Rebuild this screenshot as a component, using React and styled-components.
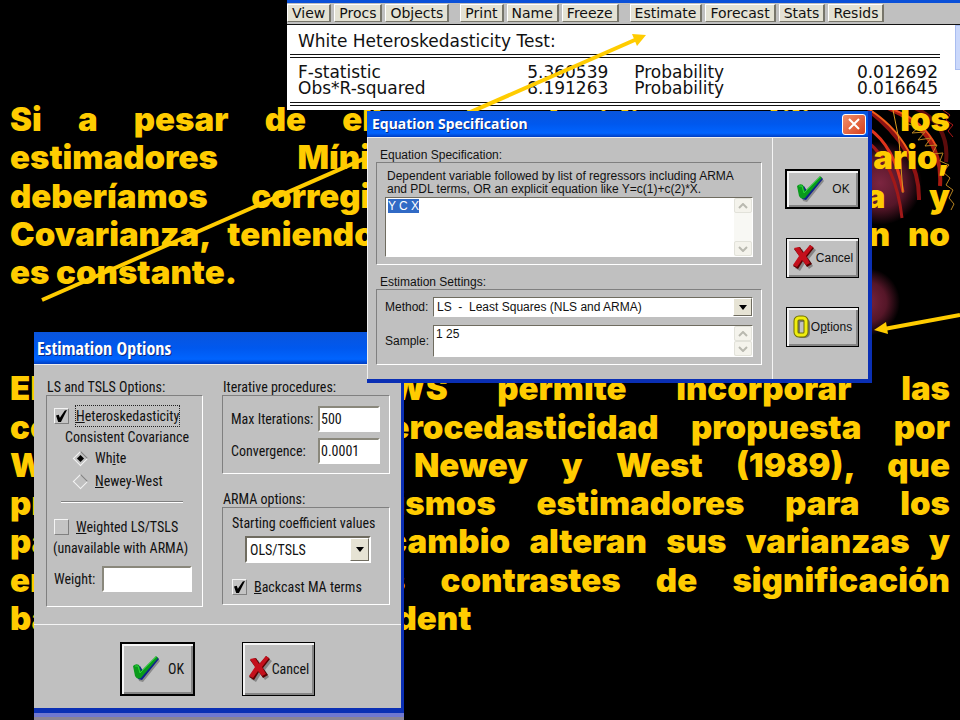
import React, { useEffect, useRef } from 'react';
import styled, { createGlobalStyle } from 'styled-components';

const GlobalStyle = createGlobalStyle`
  * {
    box-sizing: border-box;
  }

  body {
    margin: 0;
    background: #000;
  }
`;

const firstParagraph = [
  'Si a pesar de ello aún decidimos utilizar los',
  'estimadores Mínimos Cuadrados Ordinario,',
  'deberíamos corregir la matriz de Varianza y',
  'Covarianza, teniendo en cuenta que la dispersión no',
  'es constante.',
];

const secondParagraph = [
  'El programa E-VIEWS permite incorporar las',
  'correcciones de heterocedasticidad propuesta por',
  'White (1980) o de Newey y West (1989), que',
  'proporcionan los mismos estimadores para los',
  'parámetros, pero en cambio alteran sus varianzas y',
  'en consecuencia los contrastes de significación',
  'basados en las T de Student',
];

const toolGroups = [
  ['View', 'Procs', 'Objects'],
  ['Print', 'Name', 'Freeze'],
  ['Estimate', 'Forecast', 'Stats', 'Resids'],
];

const CheckIcon = () => (
  <svg width="30" height="30" viewBox="0 0 30 30" aria-hidden="true">
    <path d="M5 15 L10 14 L12 19 L27 4 L29 7 L12 28 L8 27 Z" fill="#8a8a8a" />
    <path d="M4 14 L9 12 L12 17 L26 3 L28 5 L11 26 L7 25 Z" fill="#10208c" />
    <path d="M2 12 Q5 9 8 11 L10 17 L25 2 L27 4 L10 24 Q6 26 4 22 Z" fill="#0a9a1c" />
    <path d="M4 12 L7 12 L9 19 L25 3" fill="none" stroke="#2ed43c" strokeWidth="1" />
  </svg>
);

const CrossIcon = () => (
  <svg width="24" height="28" viewBox="0 0 24 28" aria-hidden="true">
    <path d="M5 7 L10 5 L14 11 L20 3 L24 6 L17 15 L21 22 L17 25 L13 19 L8 27 L3 24 L10 15 Z" fill="#858585" />
    <path d="M2 5 L8 3 L12 9 L18 1 L22 4 L15 13 L20 20 L15 23 L11 17 L6 25 L1 22 L8 13 Z" fill="#5a0000" />
    <path d="M2 4 L7 3 L11 9 L18 1 L21 3 L14 12 L18 19 L14 21 L10 16 L5 23 L1 21 L7 12 Z" fill="#c4101c" />
  </svg>
);

const OptionsIcon = () => (
  <svg width="18" height="24" viewBox="0 0 18 24" aria-hidden="true">
    <rect x="5" y="5" width="10" height="16" rx="3" fill="none" stroke="#777" strokeWidth="4" />
    <rect x="3" y="3" width="10" height="17" rx="3" fill="none" stroke="#6f6f00" strokeWidth="5" />
    <rect x="3" y="3" width="10" height="17" rx="3" fill="none" stroke="#f0ee10" strokeWidth="3" />
  </svg>
);

const Chevron = ({ up }) => (
  <svg width="10" height="6" viewBox="0 0 10 6" aria-hidden="true">
    <path d={up ? 'M1 5 L5 1 L9 5' : 'M1 1 L5 5 L9 1'} fill="none" stroke="#b9b9b0" strokeWidth="2" />
  </svg>
);

const Fireworks = () => (
  <Backdrop viewBox="840 110 120 240" aria-hidden="true">
    <defs>
      <radialGradient id="ball">
        <stop offset="0" stopColor="#7c2540" />
        <stop offset="0.6" stopColor="#551628" />
        <stop offset="1" stopColor="#000" />
      </radialGradient>
    </defs>
    <circle cx="880" cy="183" r="42" fill="url(#ball)" />
    <circle cx="866" cy="302" r="34" fill="url(#ball)" />
    <g fill="none">
      <path d="M868 142 Q896 165 902 218" stroke="#a01818" strokeWidth="3" />
      <path d="M868 110 Q920 150 919 200" stroke="#8e1212" strokeWidth="4" />
      <path d="M868 128 Q895 146 903 192" stroke="#e0341c" strokeWidth="3" />
      <path d="M870 110 Q898 128 912 158" stroke="#f2601c" strokeWidth="2" />
      <path d="M888 108 Q944 132 940 186" stroke="#a81a10" strokeWidth="4" />
      <path d="M888 108 Q922 118 936 146" stroke="#f04a1c" strokeWidth="2" />
      <path d="M915 108 Q950 124 946 162" stroke="#5c0c0c" strokeWidth="4" />
      <path d="M893 110 L899 140 L903 193" stroke="#d69a20" />
      <path
        d="M908 124 L919 127 L912 133 L925 132 L918 140 L931 138 L925 146 L937 145 L932 154 L943 153 L940 161 L949 165 L943 172 L950 178 L946 185 L953 190 L949 198 L954 204 L951 210"
        stroke="#b88420"
      />
      <path d="M943 110 L950 115 L946 120 L953 125 L948 131 L953 137" stroke="#b01818" />
    </g>
  </Backdrop>
);

const Arrows = () => (
  <ArrowLayer aria-hidden="true">
    <line x1="42" y1="300" x2="637" y2="39" stroke="#fc0" strokeWidth="4" />
    <polygon points="646,35 632,34 637,46" fill="#fc0" />
    <line x1="960" y1="315" x2="884" y2="329" stroke="#fc0" strokeWidth="4" />
    <polygon points="874,330 886,322 888,334" fill="#fc0" />
  </ArrowLayer>
);

const Scroller = () => (
  <ScrollTrack>
    <ScrollButton type="button" aria-label="Scroll up"><Chevron up /></ScrollButton>
    <ScrollButton type="button" aria-label="Scroll down"><Chevron /></ScrollButton>
  </ScrollTrack>
);

const DropDown = ({ id, value, tall }) => (
  <SelectBox $tall={tall}>
    <Select id={id} defaultValue={value}>
      <option>{value}</option>
    </Select>
    <SelectArrow aria-hidden="true">
      <svg width="8" height="5" viewBox="0 0 8 5">
        <polygon points="0,0 8,0 4,5" fill="#000" />
      </svg>
    </SelectArrow>
  </SelectBox>
);

const TestResults = () => (
  <ResultsWindow>
    <Toolbar>
      {toolGroups.map((group) => (
        <ToolGroup key={group[0]}>
          {group.map((name) => (
            <ToolButton type="button" key={name}>{name}</ToolButton>
          ))}
        </ToolGroup>
      ))}
    </Toolbar>
    <ResultsBody>
      <Report>
        <ReportTitle>White Heteroskedasticity Test:</ReportTitle>
        <ReportTable>
          <tbody>
            <tr>
              <td>F-statistic</td>
              <td>5.360539</td>
              <td>Probability</td>
              <td>0.012692</td>
            </tr>
            <tr>
              <td>Obs*R-squared</td>
              <td>8.191263</td>
              <td>Probability</td>
              <td>0.016645</td>
            </tr>
          </tbody>
        </ReportTable>
      </Report>
      <ScrollEdge />
    </ResultsBody>
  </ResultsWindow>
);

const EquationDialog = () => {
  const equation = useRef(null);

  useEffect(() => {
    equation.current.focus();
    equation.current.select();
  }, []);

  return (
    <EquationWindow>
      <TitleBar>
        <h2>Equation Specification</h2>
        <CloseButton type="button" aria-label="Close">
          <svg width="12" height="12" viewBox="0 0 12 12">
            <path d="M1 1 L11 11 M11 1 L1 11" stroke="#fff" strokeWidth="2" />
          </svg>
        </CloseButton>
      </TitleBar>
      <EquationBody>
        <EquationFields>
          <Group>
            <legend>Equation Specification:</legend>
            <Frame>
              <label htmlFor="equation">
                Dependent variable followed by list of regressors including ARMA
                <br />
                and PDL terms, OR an explicit equation like Y=c(1)+c(2)*X.
              </label>
              <TextBox $height={60}>
                <textarea id="equation" ref={equation} defaultValue="Y C X" spellCheck="false" />
                <Scroller />
              </TextBox>
            </Frame>
          </Group>
          <Group>
            <legend>Estimation Settings:</legend>
            <Frame>
              <Setting>
                <label htmlFor="method">Method:</label>
                <DropDown id="method" value={'LS\u00a0 -\u00a0 Least Squares (NLS and ARMA)'} />
              </Setting>
              <Setting>
                <label htmlFor="sample">Sample:</label>
                <TextBox $height={32}>
                  <textarea id="sample" defaultValue="1 25" spellCheck="false" />
                  <Scroller />
                </TextBox>
              </Setting>
            </Frame>
          </Group>
        </EquationFields>
        <EquationActions>
          <ActionButton type="button" $main><CheckIcon />OK</ActionButton>
          <ActionButton type="button"><CrossIcon />Cancel</ActionButton>
          <ActionButton type="button"><OptionsIcon /><span>O<u>p</u>tions</span></ActionButton>
        </EquationActions>
      </EquationBody>
    </EquationWindow>
  );
};

const OptionsDialog = () => (
  <OptionsWindow>
    <OptionsTitle>
      <h2>Estimation Options</h2>
    </OptionsTitle>
    <OptionsBody>
      <TallGroup>
        <legend>LS and TSLS Options:</legend>
        <LeastSquaresFrame>
          <Choice>
            <CheckBox type="checkbox" defaultChecked />
            <FocusText><u>H</u>eteroskedasticity</FocusText>
          </Choice>
          <Note $indent={12}>Consistent Covariance</Note>
          <RadioList>
            <Choice>
              <Radio type="radio" name="covariance" defaultChecked />
              <span>Wh<u>i</u>te</span>
            </Choice>
            <Choice>
              <Radio type="radio" name="covariance" />
              <span><u>N</u>ewey-West</span>
            </Choice>
          </RadioList>
          <Divider />
          <Choice>
            <CheckBox type="checkbox" />
            <span><u>W</u>eighted LS/TSLS</span>
          </Choice>
          <Note>(unavailable with ARMA)</Note>
          <NumberRow>
            <label htmlFor="weight">Weight:</label>
            <NumberInput id="weight" type="text" $width={90} />
          </NumberRow>
        </LeastSquaresFrame>
      </TallGroup>
      <RightColumn>
        <TallGroup>
          <legend>Iterative procedures:</legend>
          <IterationFrame>
            <NumberRow>
              <label htmlFor="iterations">Max Iterations:</label>
              <NumberInput id="iterations" type="text" defaultValue="500" $width={62} />
            </NumberRow>
            <NumberRow>
              <label htmlFor="convergence">Convergence:</label>
              <NumberInput id="convergence" type="text" defaultValue="0.0001" $width={62} />
            </NumberRow>
          </IterationFrame>
        </TallGroup>
        <TallGroup>
          <legend>ARMA options:</legend>
          <ArmaFrame>
            <label htmlFor="starting">Starting coefficient values</label>
            <ArmaSelect>
              <DropDown id="starting" value="OLS/TSLS" tall />
            </ArmaSelect>
            <Choice>
              <CheckBox type="checkbox" defaultChecked />
              <span><u>B</u>ackcast MA terms</span>
            </Choice>
          </ArmaFrame>
        </TallGroup>
      </RightColumn>
    </OptionsBody>
    <OptionsActions>
      <ActionButton type="button" $main $tall><CheckIcon />OK</ActionButton>
      <ActionButton type="button" $tall><CrossIcon />Cancel</ActionButton>
    </OptionsActions>
  </OptionsWindow>
);

const App = () => {
  return (
    <Slide>
      <GlobalStyle />
      <Fireworks />
      <Copy>
        <Paragraph>
          {firstParagraph.map((line) => <span key={line}>{line}</span>)}
        </Paragraph>
        <Paragraph>
          {secondParagraph.map((line) => <span key={line}>{line}</span>)}
        </Paragraph>
      </Copy>
      <TestResults />
      <OptionsDialog />
      <Arrows />
      <EquationDialog />
    </Slide>
  );
};

const Slide = styled.main`
  position: relative;
  min-height: 100vh;
  overflow: hidden;
  background: #000;
  font-family: "Liberation Sans", Arial, sans-serif;
  font-size: 12px;
  color: #111;

  h2 {
    margin: 0;
  }
`;

const Backdrop = styled.svg`
  position: absolute;
  top: 110px;
  right: 0;
  width: 120px;
  height: 240px;
`;

const ArrowLayer = styled.svg`
  position: absolute;
  inset: 0;
  width: 100%;
  height: 100%;
  pointer-events: none;
`;

const Copy = styled.div`
  position: relative;
  display: flex;
  flex-direction: column;
  gap: 78px;
  padding: 100px 10px 0;
`;

const Paragraph = styled.p`
  margin: 0;
  color: #fc0;
  font-family: Inter, "Liberation Sans", sans-serif;
  font-size: 33px;
  font-weight: 900;
  line-height: 1.16;

  span {
    display: block;
    text-align: justify;
    text-align-last: justify;
    white-space: nowrap;
  }

  span:last-child {
    text-align-last: left;
  }
`;

const ResultsWindow = styled.section`
  position: absolute;
  top: 0;
  left: 287px;
  right: 0;
  border-top: 3px solid #0a50d8;
  background: #fff;
  font-family: "DejaVu Sans", Verdana, sans-serif;
`;

const Toolbar = styled.div`
  display: flex;
  gap: 11px;
  height: 22px;
  padding-top: 1px;
  background: #c0c0c0;
  border-bottom: 1px solid #111;
`;

const ToolGroup = styled.div`
  display: flex;
  gap: 3px;
`;

const ToolButton = styled.button`
  height: 18px;
  padding: 0 4px;
  border: 1px solid;
  border-color: #fff #77756a #77756a #fff;
  border-right-width: 2px;
  background: #e4e2d4;
  color: #111;
  font-family: inherit;
  font-size: 14px;
  line-height: 16px;
`;

const ResultsBody = styled.div`
  display: flex;
`;

const Report = styled.div`
  flex: 1;
  padding: 6px 0 4px 3px;
`;

const ReportTitle = styled.div`
  padding: 0 8px 3px;
  font-size: 17px;
  line-height: 20px;
`;

const ReportTable = styled.table`
  width: 100%;
  border-spacing: 0;
  border-top: 4px double #111;
  border-bottom: 4px double #111;
  padding: 6px 2px 6px 8px;
  font-size: 17px;
  line-height: 16px;

  td {
    width: 25%;
    padding: 0;
  }

  td:nth-child(2) {
    width: 23%;
  }

  td:nth-child(3) {
    padding-left: 26px;
    width: 26%;
  }

  td:nth-child(even) {
    text-align: right;
  }
`;

const ScrollEdge = styled.div`
  width: 5px;
  height: 45px;
  margin-left: 15px;
  border: 1px solid #a9bdf0;
  border-right: 0;
  background: #cad8fb;
`;

const Window = styled.section`
  position: absolute;
  background: #c0c0c0;
`;

const EquationWindow = styled(Window)`
  top: 111px;
  left: 367px;
  width: 505px;
  border: solid #0a2fb4;
  border-width: 0 4px 4px 0;
`;

const TitleBar = styled.header`
  display: flex;
  align-items: center;
  justify-content: space-between;
  height: 27px;
  padding: 0 2px 0 5px;
  background: linear-gradient(#0a55dc, #0058ee 50%, #0064ff 85%, #003dc0);
  border-bottom: 1px solid #eee;
  color: #fff;

  h2 {
    font-family: "Noto Sans", "Open Sans", sans-serif;
    font-size: 14px;
    font-weight: 700;
    line-height: 20px;
    text-shadow: 1px 1px #0a2a80;
  }
`;

const CloseButton = styled.button`
  display: flex;
  align-items: center;
  justify-content: center;
  width: 24px;
  height: 21px;
  padding: 0;
  border: 1px solid #fff;
  border-radius: 3px;
  background: linear-gradient(135deg, #f0906c, #d8401c);
`;

const EquationBody = styled.div`
  display: flex;
  border-left: 1px solid #eee;
`;

const EquationFields = styled.div`
  flex: 1;
  display: flex;
  flex-direction: column;
  gap: 11px;
  padding: 11px 10px 14px 8px;
  border-right: 1px solid #f4f4f4;
`;

const Group = styled.fieldset`
  min-width: 0;
  margin: 0;
  padding: 0;
  border: 0;

  legend {
    padding: 0 4px;
    line-height: 13px;
  }

  label {
    line-height: 13px;
  }
`;

const Frame = styled.div`
  display: flex;
  flex-direction: column;
  gap: 8px;
  padding: 7px 8px;
  border: 1px solid;
  border-color: #808080 #fff #fff #808080;

  > label {
    margin-bottom: -7px;
    padding-left: 2px;
    white-space: nowrap;
  }
`;

const TextBox = styled.div`
  display: flex;
  height: ${(props) => props.$height}px;
  border: 1px solid;
  border-color: #6f6c60 #fff #fff #6f6c60;
  background: #fff;

  textarea {
    flex: 1;
    min-width: 0;
    padding: 1px 2px;
    border: 0;
    outline: 0;
    resize: none;
    overflow: hidden;
    background: transparent;
    color: #111;
    font-family: inherit;
    font-size: 12px;
    line-height: 14px;
  }

  textarea::selection {
    background: #316ac5;
    color: #fff;
  }
`;

const ScrollTrack = styled.div`
  display: flex;
  flex-direction: column;
  justify-content: space-between;
  width: 18px;
  background: #f8f8f4;
`;

const ScrollButton = styled.button`
  display: flex;
  align-items: center;
  justify-content: center;
  height: 15px;
  padding: 0;
  border: 1px solid #e2e2da;
  border-radius: 2px;
  background: #f4f3ec;
`;

const Setting = styled.div`
  display: grid;
  grid-template-columns: 48px 1fr;
  align-items: center;
`;

const SelectBox = styled.div`
  display: flex;
  height: ${(props) => (props.$tall ? 27 : 20)}px;
  border: ${(props) => (props.$tall ? 2 : 1)}px solid;
  border-color: #6f6c60 #fff #fff #6f6c60;
  background: #fff;
`;

const Select = styled.select`
  flex: 1;
  min-width: 0;
  padding: 0 3px;
  border: 0;
  appearance: none;
  background: transparent;
  color: #111;
  font-family: inherit;
  font-size: inherit;
`;

const SelectArrow = styled.span`
  display: flex;
  align-items: center;
  justify-content: center;
  width: 19px;
  border: 1px solid;
  border-color: #fff #6f6c60 #6f6c60 #fff;
  background: #e6e3d4;
`;

const EquationActions = styled.div`
  display: flex;
  flex-direction: column;
  align-items: center;
  gap: 29px;
  width: 95px;
  padding: 31px 0 0 4px;
`;

const ActionButton = styled.button`
  display: flex;
  align-items: center;
  justify-content: center;
  gap: ${(props) => (props.$main ? 7 : 0)}px;
  width: ${(props) => (props.$main ? 75 : 73)}px;
  height: ${(props) => (props.$tall ? 54 : 40)}px;
  padding: 0;
  border: ${(props) => (props.$main ? 2 : 1)}px solid #000;
  background: #c0c0c0;
  box-shadow: inset 2px 2px #f4f4f4, inset -2px -2px #858585;
  color: #111;
  font-family: inherit;
  font-size: inherit;
  white-space: nowrap;
`;

const OptionsWindow = styled(Window)`
  top: 332px;
  left: 34px;
  width: 370px;
  border: solid #0a2fb4;
  border-width: 0 3px 5px 0;
  box-shadow: 0 4px #7078d0, 0 8px #8a8494;
  font-family: "Roboto Condensed", "Open Sans Condensed", "Liberation Sans", sans-serif;
  font-size: 14px;
`;

const OptionsTitle = styled(TitleBar)`
  height: 33px;
  padding-left: 3px;

  h2 {
    font-family: "Open Sans Condensed", "DejaVu Sans Condensed", sans-serif;
    font-size: 18px;
  }
`;

const OptionsBody = styled.div`
  display: grid;
  grid-template-columns: 157px minmax(0, 1fr);
  gap: 19px;
  padding: 12px 11px 17px 12px;
  border-bottom: 1px solid #f4f4f4;
`;

const RightColumn = styled.div`
  display: flex;
  flex-direction: column;
  gap: 15px;
`;

const TallGroup = styled(Group)`
  legend,
  label {
    line-height: 20px;
    padding: 0 1px;
    white-space: nowrap;
  }
`;

const TallFrame = styled.div`
  display: flex;
  flex-direction: column;
  margin-top: -2px;
  border: 1px solid;
  border-color: #808080 #fff #fff #808080;
`;

const LeastSquaresFrame = styled(TallFrame)`
  padding: 10px 10px 14px 6px;
`;

const IterationFrame = styled(TallFrame)`
  gap: 6px;
  padding: 10px 9px 9px 7px;
`;

const ArmaFrame = styled(TallFrame)`
  padding: 5px 8px 7px;
`;

const ArmaSelect = styled.div`
  padding: 3px 10px 14px 14px;
`;

const Choice = styled.label`
  display: flex;
  align-items: center;
  gap: 7px;
`;

const Note = styled.div`
  padding-left: ${(props) => props.$indent || 0}px;
  line-height: 22px;
  white-space: nowrap;
`;

const RadioList = styled.div`
  display: flex;
  flex-direction: column;
  gap: 3px;
  padding-left: 19px;
`;

const FocusText = styled.span`
  outline: 1px dotted #222;
`;

const CheckBox = styled.input`
  appearance: none;
  flex: none;
  width: 15px;
  height: 16px;
  margin: 0;
  border: 1px solid;
  border-color: #f4f4f4 #808080 #808080 #f4f4f4;
  background: #c4c4c4;

  &:checked::after {
    content: '';
    display: block;
    width: 11px;
    height: 12px;
    margin: 1px;
    background: #000;
    clip-path: polygon(0 45%, 25% 40%, 35% 65%, 80% 5%, 100% 0, 45% 100%, 20% 100%);
  }
`;

const Radio = styled.input`
  appearance: none;
  flex: none;
  width: 11px;
  height: 11px;
  margin: 0 2px;
  border: 1px solid;
  border-color: #808080 #f4f4f4 #f4f4f4 #f4f4f4;
  transform: rotate(45deg);

  &:checked::after {
    content: '';
    display: block;
    width: 5px;
    height: 5px;
    margin: 2px;
    background: #000;
  }
`;

const Divider = styled.hr`
  width: 122px;
  margin: 10px 0 14px 8px;
  border: 0;
  border-top: 1px solid #808080;
  border-bottom: 1px solid #fff;
`;

const NumberRow = styled.div`
  display: flex;
  align-items: center;
  justify-content: space-between;

  ${Note} + & {
    margin-top: 7px;
  }
`;

const NumberInput = styled.input`
  flex: none;
  width: ${(props) => props.$width}px;
  height: 26px;
  padding: 0 1px;
  border: 2px solid;
  border-color: #8a887c #fff #fff #8a887c;
  background: #fff;
  color: #111;
  font-family: inherit;
  font-size: inherit;
`;

const OptionsActions = styled.div`
  display: flex;
  justify-content: center;
  align-items: center;
  gap: 47px;
  padding: 17px 0 12px;
`;

export default App;
